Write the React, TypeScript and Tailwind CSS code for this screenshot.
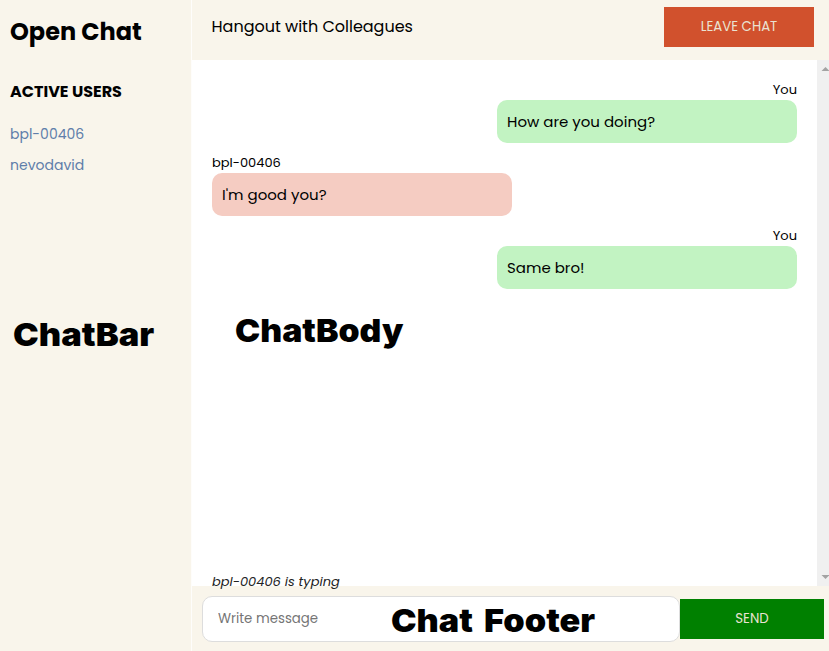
const users = ['bpl-00406', 'nevodavid'];

const messages = [
  { text: 'How are you doing?', mine: true },
  { text: "I'm good you?", mine: false },
  { text: 'Same bro!', mine: true },
];

function Caption({ text, className }: { text: string; className: string }) {
  return (
    <span
      className={`absolute origin-left font-['Arial_Black','Inter',sans-serif] text-[32px] leading-[42px] font-black whitespace-nowrap ${className}`}
    >
      {text}
    </span>
  );
}

function Sidebar() {
  return (
    <aside className="relative w-[192px] shrink-0 border-r border-[#fefdfb] bg-[#f9f5eb] pl-[10px]">
      <h2 className="mt-[14px] text-[24px] leading-9 font-bold whitespace-nowrap">Open Chat</h2>
      <h4 className="mt-[30px] text-[16px] leading-6 font-bold whitespace-nowrap">ACTIVE USERS</h4>
      <ul className="mt-[19px] text-[14px] text-[#607eaa]">
        {users.map((user) => (
          <li key={user} className="h-[31px] leading-[22px]">
            {user}
          </li>
        ))}
      </ul>
      <Caption text="ChatBar" className="top-[314px] left-[13px] scale-x-[1.077]" />
    </aside>
  );
}

function Message({ text, mine }: { text: string; mine: boolean }) {
  return (
    <div className={`flex h-[73px] flex-col ${mine ? 'items-end' : 'items-start'}`}>
      <p className="h-[20px] text-[13px] leading-[20px]">{mine ? 'You' : 'bpl-00406'}</p>
      <div className={`h-[43px] w-[300px] rounded-[10px] px-[10px] text-[15px] leading-[43px] ${mine ? 'bg-[#c2f3c2]' : 'bg-[#f5ccc2]'}`}>
        {text}
      </div>
    </div>
  );
}

function Scrollbar() {
  return (
    <div className="flex w-3 shrink-0 flex-col justify-between overflow-hidden bg-[#f0f0f0]">
      <svg width="12" height="17" viewBox="0 0 12 17" fill="#a3a3a3">
        <path d="M4.5 11 8.5 7 12.5 11Z" />
      </svg>
      <svg width="12" height="17" viewBox="0 0 12 17" fill="#a3a3a3">
        <path d="M4.5 6 8.5 10 12.5 6Z" />
      </svg>
    </div>
  );
}

export default function App() {
  return (
    <div className="flex h-[651px] w-[829px] overflow-hidden bg-white font-['Poppins',sans-serif] text-black">
      <Sidebar />
      <main className="flex min-w-0 flex-1 flex-col">
        <header className="flex h-[60px] shrink-0 items-start justify-between bg-[#f9f5eb] pr-[15px] pl-[19.5px]">
          <p className="mt-[15px] text-[16px] leading-6 whitespace-nowrap">Hangout with Colleagues</p>
          <button className="mt-[7px] h-10 w-[150px] bg-[#d1512d] text-[13.33px] text-[#eae3d2]">LEAVE CHAT</button>
        </header>
        <section className="flex h-[526px] shrink-0">
          <div className="relative flex-1 pt-[20px] pr-[20px] pl-[20px]">
            {messages.map((message) => (
              <Message key={message.text} {...message} />
            ))}
            <Caption text="ChatBody" className="top-[250px] left-[43px] scale-x-[1.055]" />
            <p className="absolute top-[512px] left-[20px] z-10 text-[13px] leading-5 whitespace-nowrap text-[#222222] italic">bpl-00406 is typing</p>
          </div>
          <Scrollbar />
        </section>
        <footer className="flex h-[65px] shrink-0 items-start bg-[#f9f5eb] pl-[10px]">
          <div className="relative mt-[10px] h-[46px] w-[478px] rounded-[10px] border border-[#dddddd] bg-white">
            <input
              className="h-full w-full bg-transparent px-[15px] text-[13.33px] outline-none placeholder:text-[#757575]"
              placeholder="Write message"
            />
            <Caption text="Chat Footer" className="top-[3px] left-[188px] scale-x-[1.07] [word-spacing:4px]" />
          </div>
          <button className="mt-[13px] h-10 w-[144px] bg-[#008000] text-[13.33px] text-[#eae3d2]">SEND</button>
        </footer>
      </main>
    </div>
  );
}
